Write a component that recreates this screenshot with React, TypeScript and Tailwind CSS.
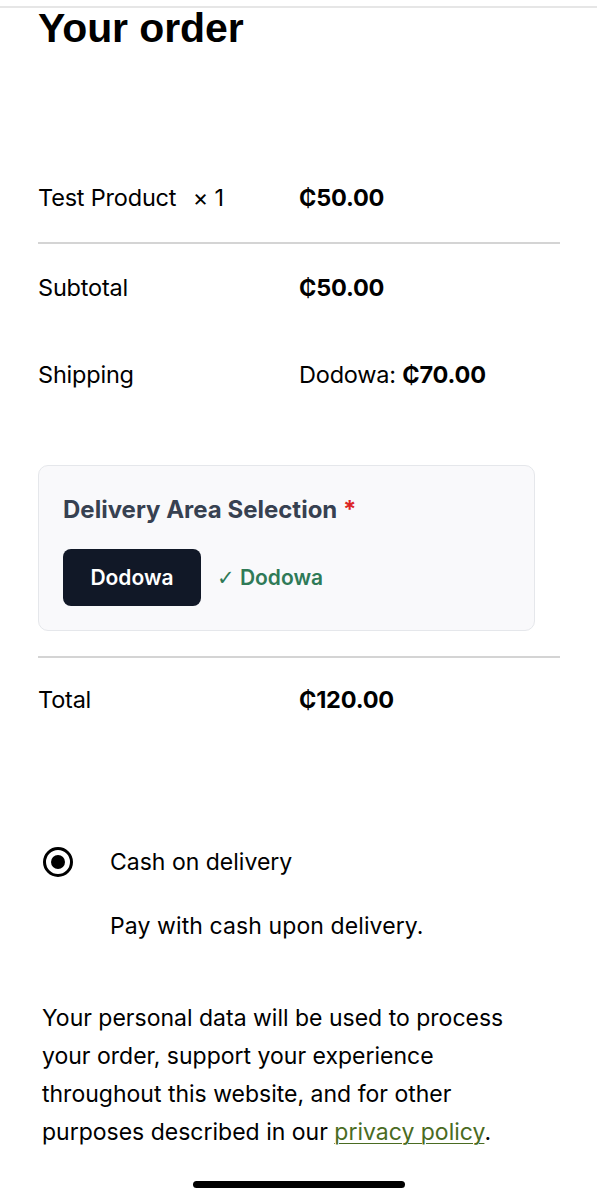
import React from "react";

const ROWS_TOP = [
  { label: "Subtotal", value: <strong className="font-bold">₵50.00</strong> },
  {
    label: "Shipping",
    value: (
      <>
        Dodowa: <strong className="font-bold">₵70.00</strong>
      </>
    ),
  },
];

function Row({ label, value, h }: { label: React.ReactNode; value: React.ReactNode; h: string }) {
  return (
    <div className={`grid grid-cols-2 items-center ${h}`}>
      <div>{label}</div>
      <div>{value}</div>
    </div>
  );
}

export default function App() {
  return (
    <div
      className="w-[597px] min-h-[1200px] bg-white text-black"
      style={{ fontFamily: "Inter, 'Noto Sans', 'DejaVu Sans', sans-serif" }}
    >
      <div className="pt-[6px]">
        <div className="h-[2px] bg-[#e6e6e6]" />
      </div>

      <div className="pl-[38px] pr-[37px]">
        <h1
          className="text-[41px] leading-[40px] font-bold tracking-[-0.1px]"
          style={{ fontFamily: "'Liberation Sans', Arial, sans-serif" }}
        >
          Your order
        </h1>

        {/* order table */}
        <div className="mt-[106px] text-[23.5px] leading-[30px] tracking-[-0.2px]">
          <Row
            h="h-[88px]"
            label={
              <>
                Test Product <span className="ml-[10px]">×&nbsp;1</span>
              </>
            }
            value={<strong className="font-bold">₵50.00</strong>}
          />
          <div className="h-[2px] bg-[#d4d4d4]" />
          {ROWS_TOP.map((r) => (
            <Row key={r.label} h="h-[87px]" label={r.label} value={r.value} />
          ))}

          {/* delivery area */}
          <div className="pt-[47px] pb-[25px] pr-[25px] tracking-normal">
            <div className="rounded-[10px] border border-[#e5e7eb] bg-[#f9f9fb] px-[24px] pt-[29px] pb-[24px]">
              <div className="text-[24px] leading-[30px] font-bold text-[#374151]">
                Delivery Area Selection <span className="text-[#dc2626]">*</span>
              </div>
              <div className="mt-[24px] flex items-center gap-[16px]">
                <button className="h-[57px] w-[138px] rounded-[8px] bg-[#111827] text-[21px] font-semibold text-white">
                  Dodowa
                </button>
                <span className="text-[21px] font-semibold text-[#2f7a57]">
                  <span style={{ fontFamily: "'DejaVu Sans', sans-serif" }} className="font-normal">
                    ✓
                  </span>{" "}
                  Dodowa
                </span>
              </div>
            </div>
          </div>

          <div className="h-[2px] bg-[#d4d4d4]" />
          <Row h="h-[84px]" label="Total" value={<strong className="font-bold">₵120.00</strong>} />
        </div>

        {/* payment */}
        <div className="pt-[104px] text-[23px] leading-[32px]">
          <div className="flex items-center">
            <span className="ml-[5px] flex h-[30px] w-[30px] items-center justify-center rounded-full border-[3px] border-black">
              <span className="h-[14px] w-[14px] rounded-full bg-black" />
            </span>
            <span className="ml-[37px]">Cash on delivery</span>
          </div>
          <p className="mt-[32px] pl-[72px] tracking-[0.1px]">Pay with cash upon delivery.</p>
        </div>

        <p className="mt-[57px] ml-[4px] w-[470px] text-[23px] leading-[38px]">
          Your personal data will be used to process your order, support your experience throughout
          this website, and for other purposes described in our{" "}
          <a href="#" className="text-[#4a6b22] underline underline-offset-[3px] decoration-1">
            privacy policy
          </a>
          .
        </p>

        <div className="mt-[30px] flex justify-center pr-[1px]">
          <div className="h-[7px] w-[212px] rounded-full bg-black" />
        </div>
      </div>
    </div>
  );
}
